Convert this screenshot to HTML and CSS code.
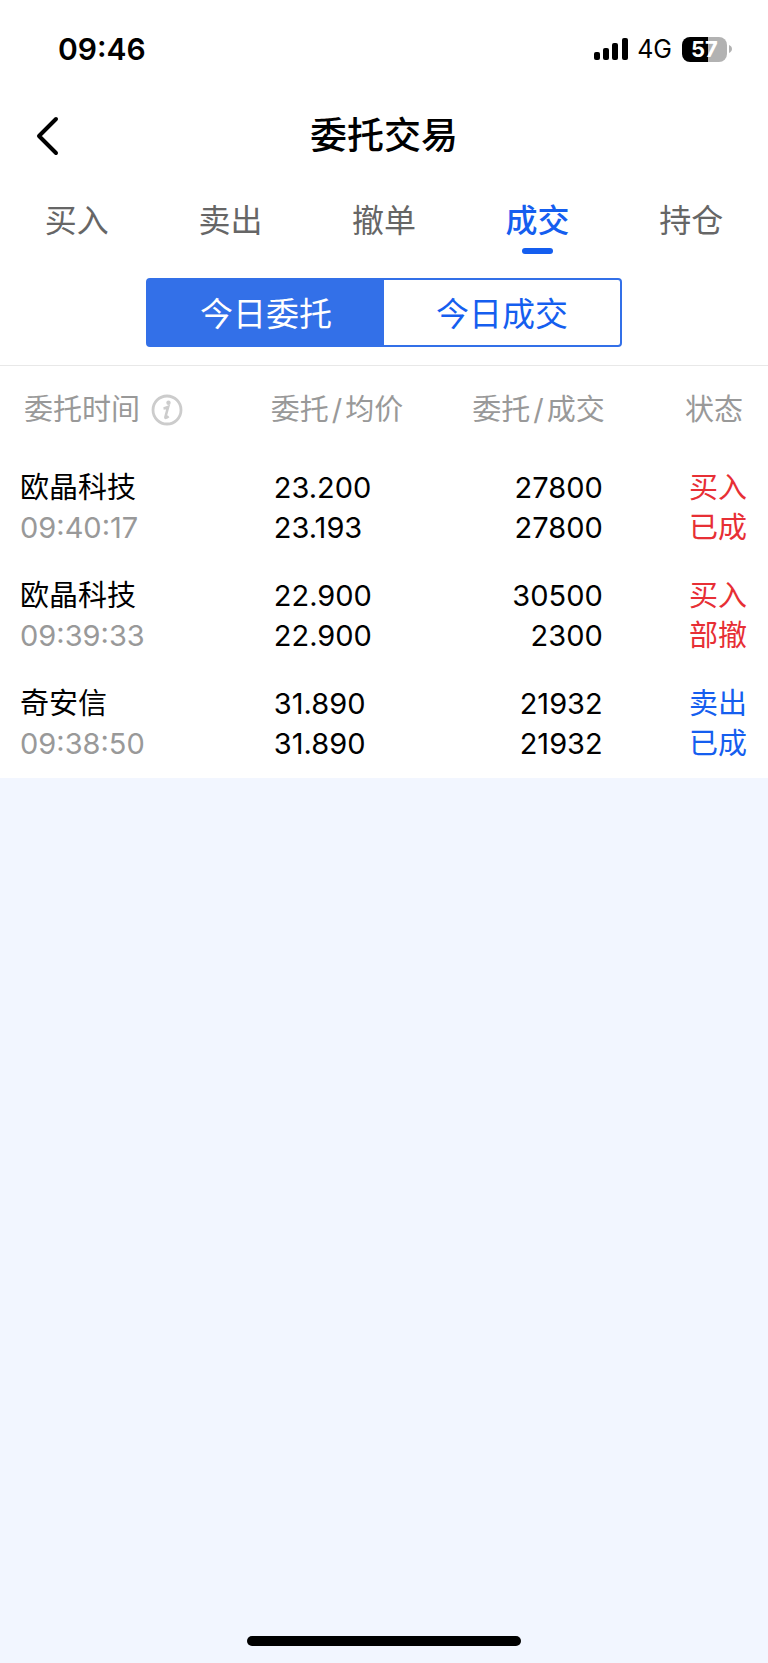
FILE: index.html
```html
<!DOCTYPE html>
<html lang="zh-CN">
<head>
  <meta charset="UTF-8" />
  <meta name="viewport" content="width=device-width, initial-scale=1.0"/>
  <title>委托交易</title>
  <link rel="stylesheet" href="styles.css">
</head>
<body>
  <div class="status-bar">
    <span class="clock">09:46</span>
    <div class="status-icons">
      <svg class="signal" width="34" height="24" viewBox="0 0 34 24" aria-hidden="true">
        <rect x="0" y="15" width="6" height="8" rx="2"/>
        <rect x="9" y="11" width="6" height="12" rx="2"/>
        <rect x="18" y="6" width="6" height="17" rx="2"/>
        <rect x="28" y="1" width="6" height="22" rx="2"/>
      </svg>
      <span class="network">4G</span>
      <div class="battery">
        <span class="battery-level">57</span>
        <svg class="battery-tip" width="3" height="8" viewBox="0 0 3 8" aria-hidden="true">
          <path d="M0 0C1.8 .8 3 2.200 3 4S1.800 7.200 0 8z"/>
        </svg>
      </div>
    </div>
  </div>

  <header class="navbar">
    <button class="back-btn" aria-label="返回">
      <svg width="24" height="40" viewBox="0 0 24 40" aria-hidden="true">
        <path d="M20 3L3 20l17 17"/>
      </svg>
    </button>
    <h1>委托交易</h1>
  </header>

  <nav class="tabs">
    <a href="#buy">买入</a>
    <a href="#sell">卖出</a>
    <a href="#cancel">撤单</a>
    <a href="#deal" class="active">成交</a>
    <a href="#hold">持仓</a>
  </nav>

  <div class="switch-wrap">
    <div class="switch">
      <button class="active">今日委托</button>
      <button>今日成交</button>
    </div>
  </div>

  <table class="orders">
    <thead>
      <tr>
        <th class="col-name">
          <div class="th-info">
            委托时间
            <svg width="32" height="32" viewBox="0 0 32 32" aria-hidden="true">
              <circle cx="16" cy="16" r="14" fill="none" stroke="#ccc" stroke-width="2.800"/>
              <circle cx="17.500" cy="8.800" r="2.200" fill="#ccc"/>
              <path d="M12.500 14.500c2-.3 3.500-.9 4.600-1.500l-2.700 10c-.3 1.200.8 1.300 3.200-.8" fill="none" stroke="#ccc" stroke-width="2.600"/>
            </svg>
          </div>
        </th>
        <th class="col-price">委托<span class="slash">/</span>均价</th>
        <th class="col-amount">委托<span class="slash">/</span>成交</th>
        <th class="col-state">状态</th>
      </tr>
    </thead>
    <tbody>
      <tr>
        <td class="col-name">欧晶科技<br><span class="time">09:40:17</span></td>
        <td class="col-price">23.200<br>23.193</td>
        <td class="col-amount">27800<br>27800</td>
        <td class="col-state buy">买入<br>已成</td>
      </tr>
      <tr>
        <td class="col-name">欧晶科技<br><span class="time">09:39:33</span></td>
        <td class="col-price">22.900<br>22.900</td>
        <td class="col-amount">30500<br>2300</td>
        <td class="col-state buy">买入<br>部撤</td>
      </tr>
      <tr>
        <td class="col-name">奇安信<br><span class="time">09:38:50</span></td>
        <td class="col-price">31.890<br>31.890</td>
        <td class="col-amount">21932<br>21932</td>
        <td class="col-state sell">卖出<br>已成</td>
      </tr>
    </tbody>
  </table>

  <div class="home-indicator"></div>
</body>
</html>
```
FILE: styles.css
```css
* {
  box-sizing: border-box;
}
body {
  margin: 0;
  min-height: 100vh;
  display: flex;
  flex-direction: column;
  background-color: #f2f6ff;
  color: #000;
  font-family: "Inter", "Noto Sans CJK SC", sans-serif;
  font-size: 29px;
}
button {
  padding: 0;
  border: none;
  background: none;
  font-family: inherit;
  cursor: pointer;
}
.status-bar {
  display: flex;
  justify-content: space-between;
  align-items: center;
  height: 98px;
  padding: 0 36px 0 58px;
  background-color: #fff;
}
.clock {
  font-size: 30px;
  font-weight: 600;
}
.status-icons {
  display: flex;
  align-items: center;
}
.network {
  margin: 0 10px 0 9px;
  font-size: 25px;
}
.battery {
  display: flex;
  align-items: center;
  gap: 2px;
}
.battery-level {
  width: 45px;
  height: 25px;
  border-radius: 8px;
  background: linear-gradient(to right, #000 57%, #b2b2b2 57%);
  color: #fff;
  font-size: 22px;
  font-weight: 700;
  line-height: 25px;
  text-align: center;
}
.battery-tip {
  fill: #b2b2b2;
}
.navbar {
  display: grid;
  grid-template-columns: 80px 1fr 80px;
  align-items: center;
  height: 76px;
  background-color: #fff;
}
.back-btn {
  height: 76px;
  padding-left: 36px;
  text-align: left;
}
.back-btn svg {
  display: block;
  fill: none;
  stroke: #000;
  stroke-width: 4;
  stroke-linecap: round;
  stroke-linejoin: round;
}
h1 {
  margin: 0;
  font-size: 37px;
  font-weight: 500;
  line-height: 48px;
  text-align: center;
}
.tabs {
  display: flex;
  height: 82px;
  padding-top: 25px;
  background-color: #fff;
}
.tabs a {
  flex: 1;
  color: #666;
  font-size: 32px;
  line-height: 44px;
  text-align: center;
  text-decoration: none;
}
.tabs .active {
  color: #155eef;
  font-weight: 500;
}
.tabs .active::after {
  content: "";
  display: block;
  width: 31px;
  height: 6px;
  margin: 5px auto 0;
  border-radius: 3px;
  background-color: #155eef;
}
.switch-wrap {
  padding: 22px 0 18px;
  border-bottom: 1px solid #e8e8e8;
  background-color: #fff;
}
.switch {
  display: flex;
  width: 62%;
  height: 69px;
  margin: 0 auto;
  border: 2px solid #3370e8;
  border-radius: 4px;
}
.switch button {
  flex: 1;
  padding-bottom: 2px;
  color: #155eef;
  font-size: 33px;
}
.switch .active {
  background-color: #3370e8;
  color: #fff;
}
.orders {
  width: 100%;
  table-layout: fixed;
  border-collapse: collapse;
  background-color: #fff;
}
.orders th {
  height: 88px;
  padding: 0;
  color: #999;
  font-weight: 400;
  line-height: 40px;
}
.orders td {
  padding: 14px 0;
  line-height: 40px;
}
.orders .col-name {
  width: 35%;
  padding-left: 20px;
  text-align: left;
}
.orders th.col-name {
  padding-left: 24px;
}
.orders .col-price {
  width: 22%;
  padding-left: 5px;
  text-align: left;
}
.orders th.col-price {
  padding-left: 2px;
}
.orders .col-amount {
  padding-right: 4px;
  text-align: right;
}
.orders th.col-amount {
  padding-right: 2px;
}
.orders .col-state {
  width: 21%;
  padding-right: 21px;
  text-align: right;
}
.orders th.col-state {
  padding-right: 25px;
}
.th-info {
  display: flex;
  align-items: center;
  gap: 11px;
}
.slash {
  margin: 0 3px;
}
.time {
  color: #999;
}
.buy {
  color: #e72f35;
}
.sell {
  color: #155eef;
}
.home-indicator {
  width: 274px;
  height: 10px;
  margin: auto auto 17px;
  border-radius: 5px;
  background-color: #000;
}
```
